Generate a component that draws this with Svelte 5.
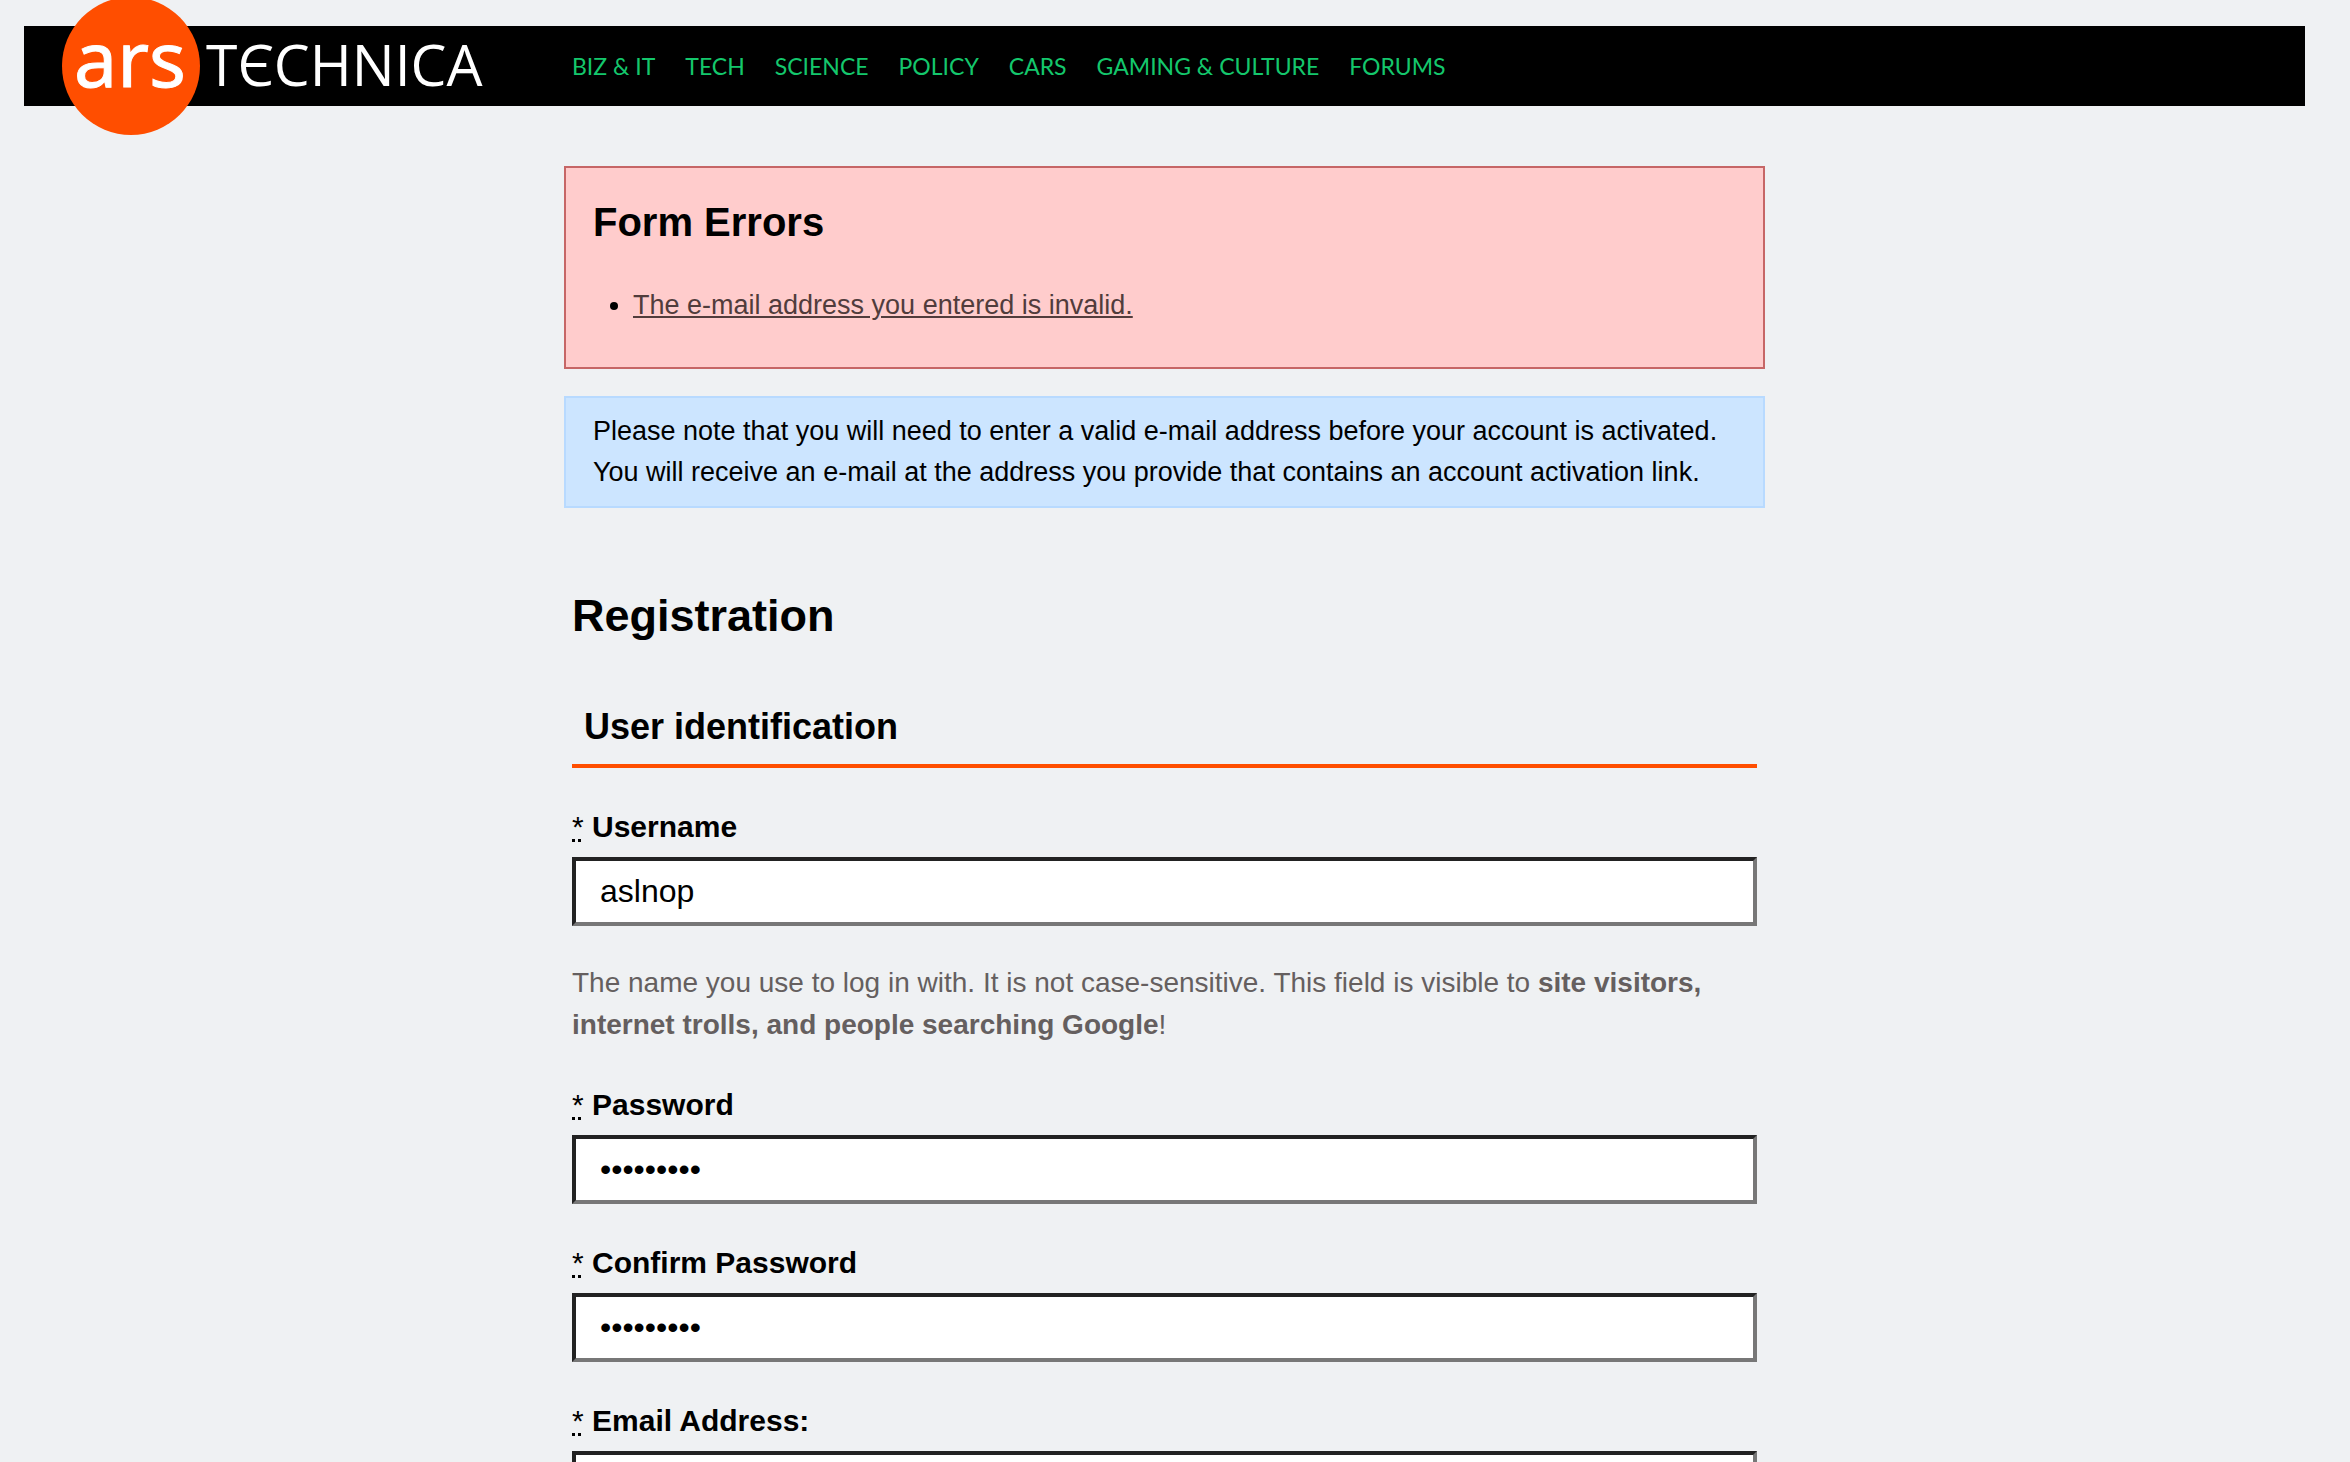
<script>
  const links = ['Biz & IT', 'Tech', 'Science', 'Policy', 'Cars', 'Gaming & Culture', 'Forums'];

  let username = $state('aslnop');
  let password = $state('password1');
  let confirmation = $state('password1');
  let email = $state('');
</script>

{#snippet caption(id, text)}
  <label for={id}><abbr title="Required">*</abbr> {text}</label>
{/snippet}

<div class="page">
  <header>
    <a class="logo" href="#home" aria-label="Ars Technica">
      <svg viewBox="0 0 430 138" aria-hidden="true">
        <circle cx="69" cy="69" r="69" fill="#ff4e00" />
        <text class="ars" x="12" y="90">ars</text>
        <text class="technica" x="144" y="89">TЄCHNICA</text>
      </svg>
    </a>
    <nav>
      {#each links as link}
        <a href="#{link}">{link}</a>
      {/each}
    </nav>
  </header>

  <main>
    <section class="errors">
      <h2>Form Errors</h2>
      <ul>
        <li><a href="#email">The e-mail address you entered is invalid.</a></li>
      </ul>
    </section>

    <p class="note">
      Please note that you will need to enter a valid e-mail address before your account is activated.
      You will receive an e-mail at the address you provide that contains an account activation link.
    </p>

    <form>
      <h1>Registration</h1>
      <h3>User identification</h3>

      <div class="field">
        {@render caption('username', 'Username')}
        <input id="username" type="text" bind:value={username} />
        <p class="help">
          The name you use to log in with. It is not case-sensitive. This field is visible to
          <strong>site visitors, internet trolls, and people searching Google</strong>!
        </p>
      </div>
      <div class="field">
        {@render caption('password', 'Password')}
        <input id="password" type="password" bind:value={password} />
      </div>
      <div class="field">
        {@render caption('confirmation', 'Confirm Password')}
        <input id="confirmation" type="password" bind:value={confirmation} />
      </div>
      <div class="field">
        {@render caption('email', 'Email Address:')}
        <input id="email" type="email" bind:value={email} />
      </div>
    </form>
  </main>
</div>

<style>
  :global(body) {
    background: #eff1f3;
  }

  .page {
    box-sizing: border-box;
    height: 100vh;
    overflow: hidden;
    padding: 26px 45px 0 24px;
    font: 27px/41px 'Liberation Sans', Arial, sans-serif;
    color: #000;
  }

  header {
    display: flex;
    align-items: center;
    height: 80px;
    padding-left: 38px;
    background: #000;
  }

  .logo {
    flex: none;
    width: 430px;
    height: 138px;
  }

  .logo svg {
    display: block;
    width: 100%;
    height: 100%;
    fill: #fff;
  }

  .ars {
    font: 400 77px 'Noto Sans', sans-serif;
    stroke: #fff;
    stroke-width: 1px;
  }

  .technica {
    font: 400 57px 'Open Sans', sans-serif;
  }

  nav {
    display: flex;
    gap: 30px;
    margin-left: 80px;
  }

  nav a {
    font-family: Lato, sans-serif;
    font-size: 23px;
    color: #14c76c;
    text-decoration: none;
    text-transform: uppercase;
    white-space: nowrap;
  }

  main {
    max-width: 1201px;
    margin: 60px auto 0;
  }

  h1,
  h2,
  h3,
  ul,
  p {
    margin: 0;
  }

  .errors {
    padding: 29px 27px 41px;
    border: 2px solid #c66666;
    background: #ffcccc;
  }

  h2 {
    font-size: 40px;
    line-height: 50px;
  }

  ul {
    margin-top: 38px;
    padding-left: 40px;
  }

  li a {
    color: #513c3c;
  }

  .note {
    margin-top: 27px;
    padding: 13px 27px;
    border: 2px solid #b8daff;
    background: #cce5ff;
  }

  form {
    padding: 74px 8px 0;
  }

  h1 {
    font-size: 45px;
    line-height: 68px;
  }

  h3 {
    margin-top: 50px;
    padding: 0 12px 10px;
    border-bottom: 4px solid #ff4e00;
    font-size: 36px;
    line-height: 54px;
  }

  .field {
    margin-top: 36px;
  }

  label {
    display: block;
    margin-bottom: 8px;
    font-size: 30px;
    font-weight: 700;
    line-height: 45px;
  }

  abbr {
    font-weight: 400;
    text-decoration: underline dotted 3px;
  }

  input {
    display: block;
    box-sizing: border-box;
    width: 100%;
    height: 69px;
    padding: 0 24px;
    border: 4px solid;
    border-color: #222 #777 #777 #222;
    border-radius: 0;
    outline: 0;
    background: #fff;
    font: 32px 'Liberation Sans', Arial, sans-serif;
    color: #000;
  }

  .help {
    margin-top: 36px;
    font-size: 28px;
    line-height: 42px;
    color: #655f5f;
  }
</style>
